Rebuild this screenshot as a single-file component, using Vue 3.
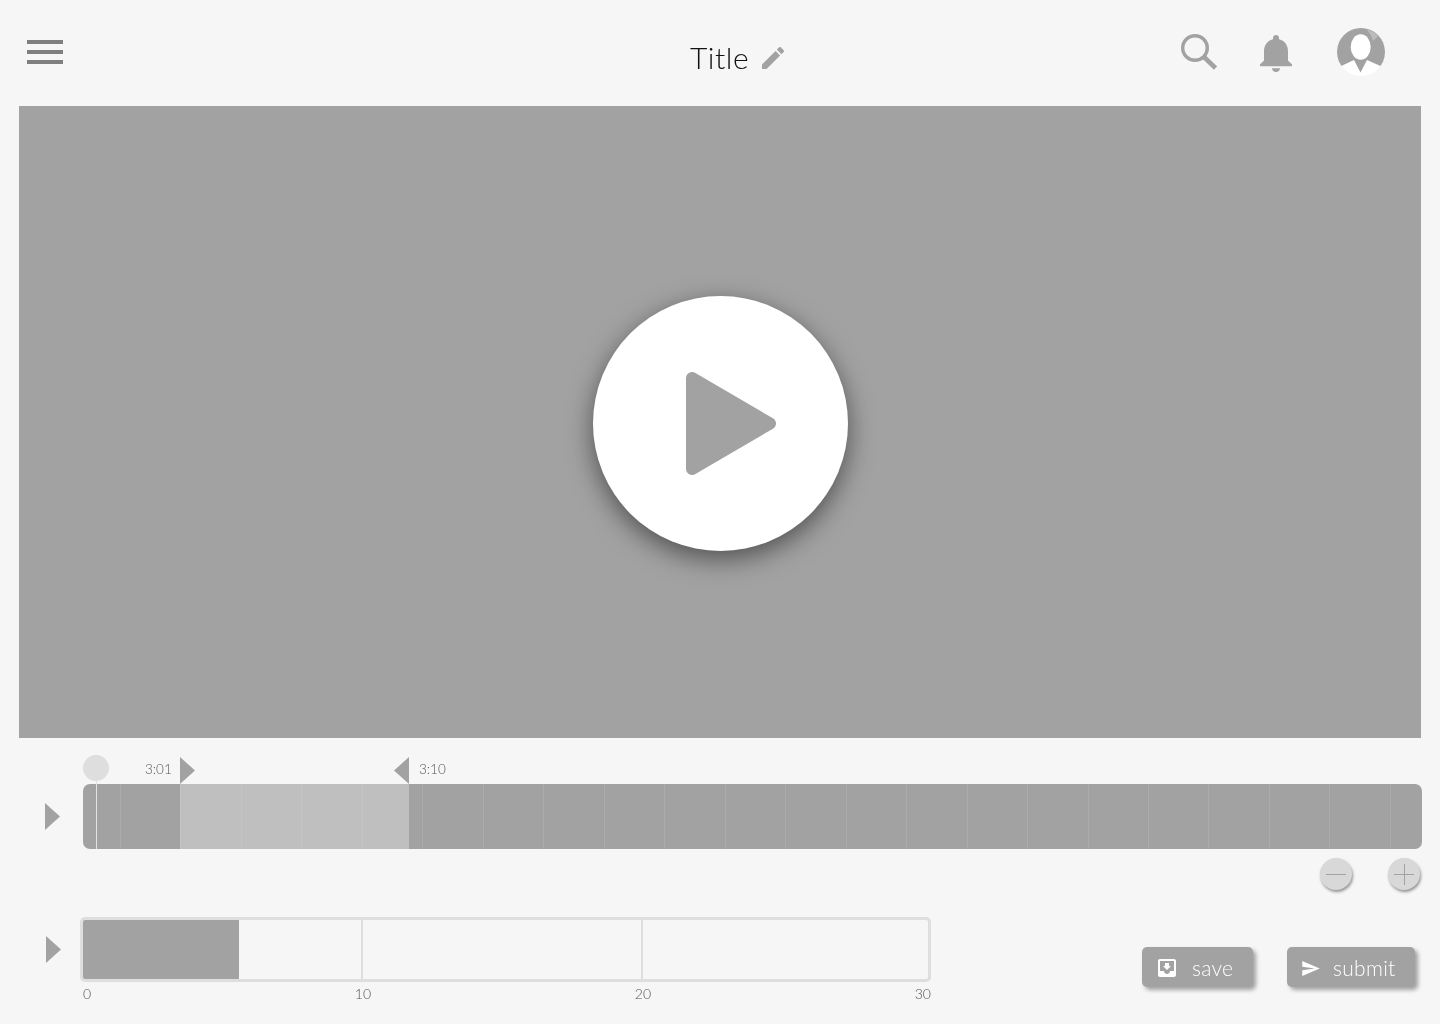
<script setup>
// 22 faint ticks along the trim bar
const ticks = Array.from({ length: 22 }, (_, i) => i);
const labels = ["0", "10", "20", "30"];
</script>

<template>
  <div class="page">
    <header class="topbar">
      <div class="menu">
        <span></span>
        <span></span>
        <span></span>
      </div>
      <div class="title">
        <h1>Title</h1>
        <svg class="pencil" viewBox="3 3 18 18">
          <path d="M3 17.25V21h3.75L17.81 9.94l-3.75-3.75L3 17.25zM20.71 7.04a.996.996 0 0 0 0-1.41l-2.34-2.34a.996.996 0 0 0-1.41 0l-1.83 1.83 3.75 3.75 1.83-1.83z" />
        </svg>
      </div>
      <div class="tools">
        <svg class="search" viewBox="0 0 36 36">
          <circle cx="14" cy="14" r="12.3" />
          <line x1="23" y1="23" x2="34.5" y2="34" />
        </svg>
        <svg class="bell" viewBox="4 2.5 16 19.5" preserveAspectRatio="none">
          <path d="M12 22c1.1 0 2-.9 2-2h-4c0 1.1.9 2 2 2zm6-6v-5c0-3.07-1.63-5.64-4.5-6.32V4c0-.83-.67-1.5-1.5-1.5s-1.5.67-1.5 1.5v.68C7.64 5.36 6 7.92 6 11v5l-2 2v1h16v-1l-2-2z" />
        </svg>
        <svg class="avatar" viewBox="0 0 48 48">
          <defs>
            <clipPath id="avatar-clip">
              <circle cx="24" cy="24" r="24" />
            </clipPath>
          </defs>
          <circle cx="24" cy="24" r="24" fill="#fff" />
          <g clip-path="url(#avatar-clip)">
            <path d="M0 0H48V40L30 32L23.5 44.5L17 32L0 40Z" fill="#a2a2a2" />
            <path d="M30 1.5A23 23 0 0 1 41 8L36 13Q34 6 30 1.5Z" fill="#bcbcbc" />
          </g>
          <ellipse cx="23.7" cy="19" rx="10" ry="12.7" fill="#fff" />
        </svg>
      </div>
    </header>

    <section class="video">
      <button class="play">
        <svg viewBox="0 0 90 103">
          <polygon points="6,6 84,51.5 6,97" />
        </svg>
      </button>
    </section>

    <section class="trim">
      <div class="markers">
        <div class="handle"></div>
        <span class="time start">3:01</span>
        <svg class="flag first" viewBox="0 0 15 27"><polygon points="0,0 15,13.5 0,27" /></svg>
        <svg class="flag second" viewBox="0 0 15 27"><polygon points="15,0 0,13.5 15,27" /></svg>
        <span class="time end">3:10</span>
      </div>
      <div class="trim-row">
        <svg class="arrow" viewBox="0 0 15 27"><polygon points="0,0 15,13.5 0,27" /></svg>
        <div class="bar">
          <span v-for="tick in ticks" :key="tick" class="tick"></span>
          <div class="selection"></div>
        </div>
      </div>
      <div class="zoom">
        <button class="round"><span class="minus"></span></button>
        <button class="round"><span class="plus"></span></button>
      </div>
    </section>

    <section class="bottom">
      <svg class="arrow" viewBox="0 0 15 27"><polygon points="0,0 15,13.5 0,27" /></svg>
      <div class="progress-wrap">
        <div class="progress">
          <div class="cell"><div class="fill"></div></div>
          <div class="cell"></div>
          <div class="cell last-cell"></div>
        </div>
        <div class="labels">
          <span v-for="label in labels" :key="label">{{ label }}</span>
        </div>
      </div>
      <div class="actions">
        <button class="action save">
          <svg viewBox="3 3 18 18">
            <path d="M19 3H4.99c-1.11 0-1.98.9-1.98 2L3 19c0 1.1.88 2 1.99 2H19c1.1 0 2-.9 2-2V5c0-1.1-.9-2-2-2zm0 12h-4c0 1.66-1.35 3-3 3s-3-1.34-3-3H4.99V5H19v10zm-3-5h-2V7h-4v3H8l4 4 4-4z" />
          </svg>
          <span>save</span>
        </button>
        <button class="action submit">
          <svg viewBox="2 3 21 18">
            <path d="M2.01 21L23 12 2.01 3 2 10l15 2-15 2z" />
          </svg>
          <span>submit</span>
        </button>
      </div>
    </section>
  </div>
</template>

<style>
html,
body {
  background: #f6f6f6;
}
</style>

<style scoped>
.page {
  width: 1440px;
  height: 1024px;
  overflow: hidden;
  background: #f6f6f6;
  font-family: Lato, "Open Sans", sans-serif;
  font-weight: 300;
  display: flex;
  flex-direction: column;
}

/* own layer so text is antialiased in plain grey */
h1,
.time,
.labels,
.action span {
  will-change: transform;
}

button {
  border: none;
  padding: 0;
  font: inherit;
  cursor: pointer;
}

svg {
  display: block;
  flex: none;
}

.topbar {
  height: 104px;
  margin-bottom: 2px;
  padding: 0 55px 0 27px;
  box-sizing: border-box;
  display: grid;
  grid-template-columns: 663px 1fr auto;
  align-items: center;
}

.menu {
  width: 36px;
  display: flex;
  flex-direction: column;
  gap: 6px;
}

.menu span {
  height: 4px;
  background: #7f7f7f;
}

.title {
  display: flex;
  align-items: center;
  gap: 14px;
  margin-top: 11px;
}

.title h1 {
  margin: 0 0 2px;
  width: 58px;
  white-space: nowrap;
  font-size: 30px;
  font-weight: 300;
  color: #111;
  letter-spacing: 0.5px;
}

.pencil {
  width: 22px;
  height: 22px;
  fill: #a2a2a2;
}

.tools {
  display: flex;
  align-items: center;
}

.search {
  width: 36px;
  height: 36px;
  fill: none;
  stroke: #a2a2a2;
  stroke-width: 3.4;
}

.search line {
  stroke-width: 4.6;
}

.bell {
  width: 32px;
  height: 37px;
  margin-left: 43px;
  margin-top: 3px;
  fill: #a2a2a2;
}

.avatar {
  width: 48px;
  height: 48px;
  margin-left: 45px;
}

.video {
  height: 632px;
  margin: 0 19px;
  padding-top: 2px;
  box-sizing: border-box;
  background: #a2a2a2;
  display: flex;
  align-items: center;
  justify-content: center;
}

.play {
  width: 255px;
  height: 255px;
  border-radius: 50%;
  background: #fff;
  box-shadow: 0 8px 26px rgba(0, 0, 0, 0.5);
  display: flex;
  align-items: center;
  justify-content: center;
}

.play svg {
  width: 90px;
  height: 103px;
  margin-left: 22px;
  fill: #a2a2a2;
  stroke: #a2a2a2;
  stroke-width: 12;
  stroke-linejoin: round;
}

.markers {
  height: 46px;
  padding-left: 83px;
  display: flex;
  align-items: flex-end;
}

.handle {
  position: relative;
  z-index: 2;
  width: 26px;
  height: 26px;
  margin-bottom: 3px;
  border-radius: 50%;
  background: #dedede;
}

/* the playhead hangs from the handle over the bar */
.handle::after {
  content: "";
  position: absolute;
  left: 12.5px;
  top: 26px;
  width: 1px;
  height: 68px;
  background: #e2e2e2;
}

.time {
  width: 25px;
  white-space: nowrap;
  font-size: 13.5px;
  color: #555;
  line-height: 30px;
}

.start {
  margin-left: 36px;
}

.end {
  margin-left: 10px;
}

.flag {
  width: 15px;
  height: 27px;
  fill: #a2a2a2;
}

.first {
  margin-left: 10px;
}

.second {
  margin-left: 199px;
}

.trim-row {
  height: 65px;
  padding-left: 45px;
  display: flex;
  align-items: center;
}

.arrow {
  width: 15px;
  height: 27px;
  fill: #a2a2a2;
}

.bar {
  position: relative;
  width: 1339px;
  height: 65px;
  margin-left: 23px;
  padding-left: 37px;
  box-sizing: border-box;
  border-radius: 7px;
  overflow: hidden;
  background: #a2a2a2;
  display: flex;
}

.tick {
  flex: 0 0 60.47px;
  box-sizing: border-box;
  border-left: 1px solid #acacac;
}

.selection {
  position: absolute;
  left: 97px;
  top: 0;
  width: 229px;
  height: 100%;
  background: rgba(255, 255, 255, 0.31);
}

.zoom {
  margin-top: 9px;
  padding-right: 20px;
  display: flex;
  justify-content: flex-end;
  gap: 36px;
}

.round {
  position: relative;
  width: 32px;
  height: 32px;
  border-radius: 50%;
  background: #d8d8d8;
  box-shadow: 1px 2px 3px rgba(0, 0, 0, 0.4);
  display: flex;
  align-items: center;
  justify-content: center;
}

.minus,
.plus {
  display: block;
  width: 20px;
  height: 1px;
  background: #a2a2a2;
}

.plus {
  position: relative;
}

.plus::after {
  content: "";
  position: absolute;
  left: 10px;
  top: -10px;
  width: 1px;
  height: 21px;
  background: #a2a2a2;
}

.bottom {
  margin-top: 27px;
  padding-left: 46px;
  display: flex;
  align-items: flex-start;
}

.bottom .arrow {
  margin-top: 19px;
}

.progress-wrap {
  width: 851px;
  margin-left: 19px;
}

.progress {
  height: 65px;
  box-sizing: border-box;
  border: 3px solid #dedede;
  border-radius: 5px;
  display: grid;
  grid-template-columns: 280px 280px 1fr;
}

.cell {
  border-right: 2px solid #dedede;
}

.last-cell {
  border-right: none;
}

.fill {
  width: 156px;
  height: 100%;
  background: #a2a2a2;
  border-radius: 2px 0 0 2px;
}

.labels {
  margin-top: 3px;
  margin-left: 3px;
  display: flex;
  justify-content: space-between;
  font-size: 14px;
  line-height: 18px;
  color: #555;
}

.actions {
  margin-left: 211px;
  margin-top: 30px;
  display: flex;
  gap: 34px;
}

.action {
  height: 40px;
  border-radius: 5px;
  background: #a2a2a2;
  box-shadow: 3px 3px 4px rgba(0, 0, 0, 0.35);
  color: #fff;
  font-size: 21px;
  font-weight: 300;
  letter-spacing: 0.3px;
  display: flex;
  align-items: center;
}

.save {
  width: 111px;
  padding-left: 16px;
  gap: 16px;
}

.submit {
  width: 128px;
  padding-left: 15px;
  gap: 13px;
}

.action svg {
  fill: #fff;
  margin-top: 2px;
}

.save svg {
  width: 18px;
  height: 18px;
}

.submit svg {
  width: 18px;
  height: 15px;
}
</style>
